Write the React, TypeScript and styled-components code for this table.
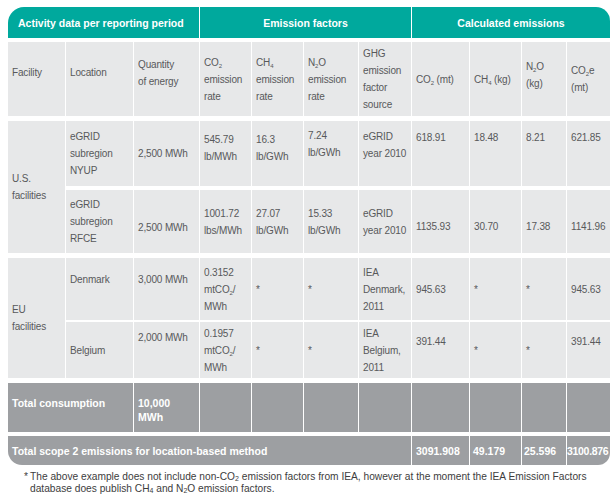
import React from 'react';
import styled, { createGlobalStyle } from 'styled-components';

const COLS = '57px 67px 65px 51px 51px 54px 52px 57px 51px 44px 43px';
const TEAL = '#00a99d';
const LIGHT = '#e7e8e9';
const DARK = '#9d9fa2';

const GlobalStyle = createGlobalStyle`
  body {
    margin: 0;
    background: #fff;
    font-family: "Liberation Sans", Arial, sans-serif;
  }
`;

const Page = styled.div`
  padding: 7px 0 0 8px;
  width: 602px;
`;

const Row = styled.div<{ $rows?: string; $gap?: number; $mt?: number }>`
  display: grid;
  grid-template-columns: ${COLS};
  grid-template-rows: ${p => p.$rows || 'auto'};
  column-gap: 1px;
  row-gap: ${p => p.$gap ?? 0}px;
  margin-top: ${p => p.$mt ?? 0}px;
`;

const Band = styled.div<{ $span: number; $center?: boolean; $radius?: string }>`
  grid-column: span ${p => p.$span};
  background: ${TEAL};
  color: #fff;
  font-weight: bold;
  font-size: 10.5px;
  display: flex;
  align-items: center;
  justify-content: ${p => (p.$center ? 'center' : 'flex-start')};
  padding-left: ${p => (p.$center ? 0 : 10)}px;
  border-radius: ${p => p.$radius || '0'};
`;

const Cell = styled.div<{ $span?: number; $rows?: number; $pt?: number }>`
  grid-column: span ${p => p.$span ?? 1};
  ${p => (p.$rows ? `grid-row: span ${p.$rows};` : '')}
  background: ${LIGHT};
  color: #58595b;
  font-size: 10px;
  line-height: 17px;
  letter-spacing: -0.15px;
  white-space: nowrap;
  padding: ${p => (p.$pt != null ? `${p.$pt}px 4px 0` : '0 4px')};
  display: flex;
  flex-direction: column;
  justify-content: ${p => (p.$pt != null ? 'flex-start' : 'center')};
`;

const Total = styled.div<{ $span?: number; $top?: boolean; $radius?: string; $pad?: number; $tight?: boolean }>`
  grid-column: span ${p => p.$span ?? 1};
  background: ${DARK};
  color: #fff;
  font-weight: bold;
  font-size: 10.5px;
  line-height: 14px;
  white-space: nowrap;
  letter-spacing: ${p => (p.$tight ? '-0.3px' : 'normal')};
  padding: ${p => (p.$top ? '13px' : '0')} ${p => p.$pad ?? 4}px 0;
  display: flex;
  flex-direction: column;
  justify-content: ${p => (p.$top ? 'flex-start' : 'center')};
  border-radius: ${p => p.$radius || '0'};
`;

const Sub = styled.sub`
  font-size: 6px;
  line-height: 0;
  vertical-align: -2px;
`;

const Note = styled.div`
  margin-top: 6px;
  padding-left: 22px;
  font-size: 10.2px;
  line-height: 12px;
  color: #3d3d3d;
  white-space: nowrap;
  sub {
    font-size: 7px;
    vertical-align: -1px;
    line-height: 0;
  }
`;

const Star = styled.span`
  display: inline-block;
  width: 6px;
  margin-left: -6px;
`;

const Lines = ({ items }: { items: React.ReactNode[] }) => (
  <>
    {items.map((it, i) => (
      <div key={i}>{it}</div>
    ))}
  </>
);

const CO2 = () => <>CO<Sub>2</Sub></>;
const CH4 = () => <>CH<Sub>4</Sub></>;
const N2O = () => <>N<Sub>2</Sub>O</>;

export default function App() {
  return (
    <Page>
      <GlobalStyle />
      <Row $rows="31px">
        <Band $span={3} $radius="16px 0 0 0">Activity data per reporting period</Band>
        <Band $span={4} $center>Emission factors</Band>
        <Band $span={4} $center $radius="0 14px 0 0">Calculated emissions</Band>
      </Row>

      <Row $rows="74px" $mt={4}>
        <Cell $pt={22}>Facility</Cell>
        <Cell $pt={22}>Location</Cell>
        <Cell $pt={14}><Lines items={['Quantity', 'of energy']} /></Cell>
        <Cell><Lines items={[<CO2 />, 'emission', 'rate']} /></Cell>
        <Cell><Lines items={[<CH4 />, 'emission', 'rate']} /></Cell>
        <Cell><Lines items={[<N2O />, 'emission', 'rate']} /></Cell>
        <Cell><Lines items={['GHG', 'emission', 'factor', 'source']} /></Cell>
        <Cell><Lines items={[<><CO2 /> (mt)</>]} /></Cell>
        <Cell><Lines items={[<><CH4 /> (kg)</>]} /></Cell>
        <Cell $pt={16}><Lines items={[<N2O />, '(kg)']} /></Cell>
        <Cell><Lines items={[<><CO2 />e</>, '(mt)']} /></Cell>
      </Row>

      <Row $rows="65px 63px" $gap={4} $mt={5}>
        <Cell $rows={2}><Lines items={['U.S.', 'facilities']} /></Cell>
        <Cell><Lines items={['eGRID', 'subregion', 'NYUP']} /></Cell>
        <Cell>2,500 MWh</Cell>
        <Cell $pt={10}><Lines items={['545.79', 'lb/MWh']} /></Cell>
        <Cell $pt={10}><Lines items={['16.3', 'lb/GWh']} /></Cell>
        <Cell $pt={6}><Lines items={['7.24', 'lb/GWh']} /></Cell>
        <Cell $pt={7}><Lines items={['eGRID', 'year 2010']} /></Cell>
        <Cell $pt={8}>618.91</Cell>
        <Cell $pt={8}>18.48</Cell>
        <Cell $pt={8}>8.21</Cell>
        <Cell $pt={8}>621.85</Cell>

        <Cell><Lines items={['eGRID', 'subregion', 'RFCE']} /></Cell>
        <Cell $pt={29}>2,500 MWh</Cell>
        <Cell><Lines items={['1001.72', 'lbs/MWh']} /></Cell>
        <Cell><Lines items={['27.07', 'lb/GWh']} /></Cell>
        <Cell><Lines items={['15.33', 'lb/GWh']} /></Cell>
        <Cell><Lines items={['eGRID', 'year 2010']} /></Cell>
        <Cell $pt={28}>1135.93</Cell>
        <Cell $pt={28}>30.70</Cell>
        <Cell $pt={28}>17.38</Cell>
        <Cell $pt={28}>1141.96</Cell>
      </Row>

      <Row $rows="62px 56px" $gap={2} $mt={5}>
        <Cell $rows={2}><Lines items={['EU', 'facilities']} /></Cell>
        <Cell $pt={13}>Denmark</Cell>
        <Cell $pt={13}>3,000 MWh</Cell>
        <Cell><Lines items={['0.3152', <>mt<CO2 />/</>, 'MWh']} /></Cell>
        <Cell>*</Cell>
        <Cell>*</Cell>
        <Cell><Lines items={['IEA', 'Denmark,', '2011']} /></Cell>
        <Cell>945.63</Cell>
        <Cell>*</Cell>
        <Cell>*</Cell>
        <Cell>945.63</Cell>

        <Cell>Belgium</Cell>
        <Cell $pt={7}>2,000 MWh</Cell>
        <Cell><Lines items={['0.1957', <>mt<CO2 />/</>, 'MWh']} /></Cell>
        <Cell>*</Cell>
        <Cell>*</Cell>
        <Cell><Lines items={['IEA', 'Belgium,', '2011']} /></Cell>
        <Cell $pt={11}>391.44</Cell>
        <Cell>*</Cell>
        <Cell>*</Cell>
        <Cell $pt={11}>391.44</Cell>
      </Row>

      <Row $rows="49px" $mt={5}>
        <Total $span={2} $top>Total consumption</Total>
        <Total $top><Lines items={['10,000', 'MWh']} /></Total>
        {Array.from({ length: 8 }).map((_, i) => (
          <Total key={i} />
        ))}
      </Row>

      <Row $rows="29px" $mt={4}>
        <Total $span={7} $radius="0 0 0 14px">Total scope 2 emissions for location-based method</Total>
        <Total>3091.908</Total>
        <Total $pad={3}>49.179</Total>
        <Total $pad={2}>25.596</Total>
        <Total $pad={0} $tight $radius="0 0 12px 0">3100.876</Total>
      </Row>

      <Note>
        <Star>*</Star>The above example does not include non-CO<sub>2</sub> emission factors from IEA, however at the moment the IEA Emission Factors
        <br />
        database does publish CH<sub>4</sub> and N<sub>2</sub>O emission factors.
      </Note>
    </Page>
  );
}
